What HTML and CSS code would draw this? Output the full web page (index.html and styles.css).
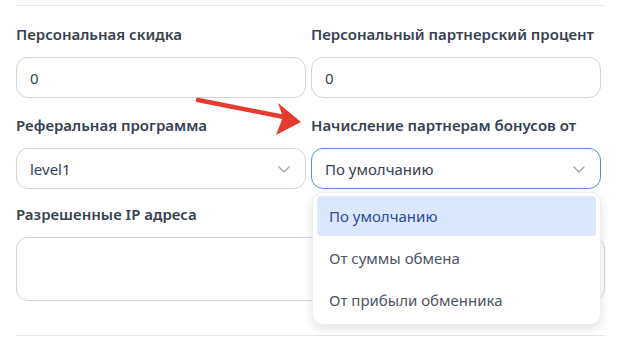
FILE: index.html
```html
<!DOCTYPE html>
<html lang="ru">
<head>
    <meta charset="UTF-8">
    <meta name="viewport" content="width=device-width, initial-scale=1.0">
    <title>Настройки партнера</title>
    <link rel="stylesheet" href="styles.css">
</head>
<body>
    <div class="container">
        <div class="divider top"></div>

        <div class="grid">
            <div class="field">
                <div class="label">Персональная скидка</div>
                <div class="input">0</div>
            </div>
            <div class="field">
                <div class="label">Персональный партнерский процент</div>
                <div class="input">0</div>
            </div>
            <div class="field">
                <div class="label">Реферальная программа</div>
                <div class="input select">
                    <span>level1</span>
                    <svg class="chevron" viewBox="0 0 12 7" width="12" height="7" aria-hidden="true">
                        <path d="M1 1l5 5 5-5" fill="none" stroke="currentColor" stroke-width="1.4" stroke-linecap="round" stroke-linejoin="round"></path>
                    </svg>
                </div>
            </div>
            <div class="field">
                <div class="label">Начисление партнерам бонусов от</div>
                <div class="select-wrap">
                    <div class="input select focused">
                        <span>По умолчанию</span>
                        <svg class="chevron" viewBox="0 0 12 7" width="12" height="7" aria-hidden="true">
                            <path d="M1 1l5 5 5-5" fill="none" stroke="currentColor" stroke-width="1.4" stroke-linecap="round" stroke-linejoin="round"></path>
                        </svg>
                    </div>
                    <div class="dropdown">
                        <div class="option active">По умолчанию</div>
                        <div class="option">От суммы обмена</div>
                        <div class="option">От прибыли обменника</div>
                    </div>
                </div>
            </div>
        </div>

        <div class="field wide">
            <div class="label">Разрешенные IP адреса</div>
            <div class="textarea"></div>
        </div>

        <div class="divider bottom"></div>

        <svg class="arrow" viewBox="0 0 621 349" width="621" height="349" aria-hidden="true">
            <line x1="198" y1="100" x2="284" y2="117" stroke="#e53a2f" stroke-width="4.5" stroke-linecap="round"></line>
            <polygon points="301,122 278,103 283,117 276,135" fill="#e53a2f"></polygon>
        </svg>
    </div>
</body>
</html>
```

FILE: styles.css
```css
body {
    margin: 0;
    padding: 0;
    background-color: #ffffff;
    font-family: "Noto Sans", "Open Sans", sans-serif;
    color: #374151;
}
.container {
    position: relative;
    width: 621px;
    height: 349px;
    padding: 5px 0 0 16px;
    box-sizing: border-box;
    overflow: hidden;
}
.divider {
    width: 589px;
    height: 1px;
    background-color: #e5e7eb;
}
.divider.top {
    margin-bottom: 18px;
}
.divider.bottom {
    margin-top: 34px;
}
.grid {
    display: grid;
    grid-template-columns: 290px 290px;
    column-gap: 5px;
    row-gap: 17px;
}
.field {
    display: flex;
    flex-direction: column;
    gap: 13px;
}
.field.wide {
    margin-top: 15px;
}
.label {
    font-size: 15px;
    font-weight: 600;
    line-height: 20px;
    color: #374151;
    white-space: nowrap;
}
.input {
    height: 41px;
    box-sizing: border-box;
    border: 1px solid #d1d5db;
    border-radius: 12px;
    padding: 0 13px;
    display: flex;
    align-items: center;
    font-size: 15px;
    color: #374151;
    background-color: #ffffff;
}
.select {
    justify-content: space-between;
}
.select .chevron {
    color: #9ca3af;
    margin-right: 2px;
    margin-top: 1px;
}
.focused {
    border-color: #5b8bd0;
}
.select-wrap {
    position: relative;
}
.dropdown {
    position: absolute;
    top: 44px;
    left: 1px;
    width: 289px;
    box-sizing: border-box;
    padding: 3px 4px;
    background-color: #ffffff;
    border: 1px solid #eceef2;
    border-radius: 11px;
    box-shadow: 0 4px 10px rgba(17, 24, 39, 0.12);
    z-index: 2;
}
.option {
    height: 42px;
    padding: 0 12px;
    display: flex;
    align-items: center;
    font-size: 15px;
    color: #4b5563;
    border-radius: 4px;
}
.option.active {
    height: 40px;
    margin-bottom: 1px;
    background-color: #dbe8fc;
    color: #2d4a9e;
}
.textarea {
    width: 589px;
    height: 64px;
    box-sizing: border-box;
    border: 1px solid #d1d5db;
    border-radius: 12px;
}
.arrow {
    position: absolute;
    top: 0;
    left: 0;
    pointer-events: none;
    z-index: 3;
}
```
